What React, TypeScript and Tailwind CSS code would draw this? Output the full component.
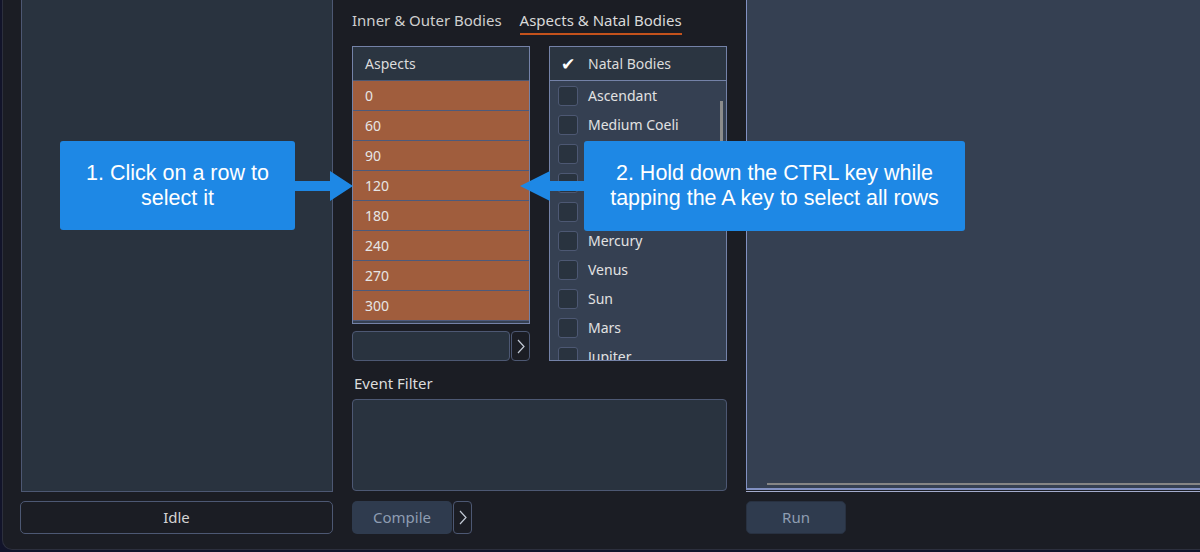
import React from "react";

const aspects = ["0", "60", "90", "120", "180", "240", "270", "300"];
const bodies = ["Ascendant", "Medium Coeli", "Vertex", "True Node", "Moon", "Mercury", "Venus", "Sun", "Mars", "Jupiter", "Saturn"];

function Chevron() {
  return (
    <svg width="8" height="15" viewBox="0 0 8 15" fill="none">
      <polyline points="1,1 7,7.5 1,14" stroke="#c3cad6" strokeWidth="1.2" />
    </svg>
  );
}

export default function App() {
  return (
    <div className="relative w-[1200px] h-[552px] overflow-hidden bg-[#12142a] font-['Noto_Sans',sans-serif] text-[14px]">
      <div className="ml-[2px] h-[550px] bg-[#1b1d24] border-l border-b border-[#2c2f3d] rounded-bl-[10px] flex gap-[19px] pl-[17px]">
        {/* Left column */}
        <div className="w-[313px] flex flex-col">
          <div className="ml-px h-[492px] bg-[#29333f] border-x border-b border-[#4d5873]" />
          <div className="mt-[9px] h-[33px] rounded-[5px] border border-[#4d5873] flex items-center justify-center text-[#d4d4d4] text-[15px]">
            Idle
          </div>
        </div>

        {/* Middle column */}
        <div className="w-[375px] flex flex-col">
          <div className="h-[46px] flex items-start pt-[10px] text-[15px] leading-[20px]">
            <div className="text-[#cfcfcf] pb-[3px] border-b-2 border-transparent">Inner &amp; Outer Bodies</div>
            <div className="ml-[18px] text-[#d9d9d9] pb-[3px] border-b-2 border-[#c4521c]">Aspects &amp; Natal Bodies</div>
          </div>
          <div className="flex gap-[19px]">
            <div className="w-[178px] flex flex-col">
              <div className="h-[278px] border border-[#7482a8] bg-[#354052] flex flex-col overflow-hidden">
                <div className="h-[34px] shrink-0 bg-[#2b3541] border-b border-[#4d5873] flex items-center pl-[12px] text-[#dcdcdc]">
                  Aspects
                </div>
                {aspects.map((a) => (
                  <div key={a} className="h-[30px] shrink-0 bg-[#a05d3d] border-b border-[#4d5a7c] flex items-center pl-[12px] text-[#e6e6e6]">
                    {a}
                  </div>
                ))}
              </div>
              <div className="mt-[7px] h-[30px] flex gap-px">
                <div className="w-[158px] rounded-[4px] border border-[#4d5873] bg-[#29333f]" />
                <div className="w-[19px] rounded-[4px] border border-[#4d5873] bg-[#1b1d24] flex items-center justify-center">
                  <Chevron />
                </div>
              </div>
            </div>
            <div className="relative w-[178px] h-[315px] border border-[#7482a8] bg-[#354052] overflow-hidden flex flex-col">
              <div className="h-[34px] shrink-0 bg-[#2b3541] border-b border-[#7482a8] flex items-center text-[#dcdcdc]">
                <span className="ml-[11px] w-[27px] text-[17px] leading-[20px] text-white font-['DejaVu_Sans',sans-serif]">✔</span>
                <span>Natal Bodies</span>
              </div>
              {bodies.map((b) => (
                <div key={b} className="h-[29px] shrink-0 flex items-center pl-[8px] text-[#e2e2e2]">
                  <div className="w-[20px] h-[20px] rounded-[3px] border border-[#4d5873] bg-[#29333f]" />
                  <span className="ml-[10px]">{b}</span>
                </div>
              ))}
              <div className="absolute right-[3px] top-[54px] w-[3px] h-[110px] bg-[#8c8c8c]" />
            </div>
          </div>
          <div className="mt-[12px] pl-[2px] leading-[20px] text-[15px] text-[#dcdcdc]">Event Filter</div>
          <div className="mt-[6px] h-[92px] rounded-[4px] border border-[#4d5873] bg-[#29333f]" />
          <div className="mt-[10px] h-[33px] flex gap-px">
            <div className="w-[100px] rounded-[5px] bg-[#2f3b4e] flex items-center justify-center text-[15px] text-[#8e9db2]">
              Compile
            </div>
            <div className="w-[19px] rounded-[4px] border border-[#4d5873] bg-[#1b1d24] flex items-center justify-center">
              <Chevron />
            </div>
          </div>
        </div>

        {/* Right column */}
        <div className="flex-1 flex flex-col">
          <div className="relative h-[490px] bg-[#354052] border-l border-b-2 border-[#8291c2]">
            <div className="absolute left-[20px] right-0 bottom-[3px] h-[2px] bg-[#858585]" />
          </div>
          <div className="mt-px h-px bg-[#a3abcb]" />
          <div className="mt-[9px] w-[100px] h-[33px] rounded-[5px] bg-[#2f3b4e] border border-[#283141] flex items-center justify-center text-[15px] text-[#8e9db2]">
            Run
          </div>
        </div>
      </div>

      {/* Callout 1 */}
      <div className="absolute left-[60px] top-[141px] w-[235px] h-[89px] rounded-[3px] bg-[#1e88e5] flex items-center justify-center text-center text-white text-[21.5px] leading-[25px] font-['Liberation_Sans',Arial,sans-serif]">
        <div>
          1. Click on a row to
          <br />
          select it
        </div>
      </div>
      <svg className="absolute left-[295px] top-[170px]" width="58" height="31" viewBox="0 0 58 31">
        <polygon points="0,11 35,11 35,1 58,16 35,31 35,21 0,21" fill="#1e88e5" />
      </svg>

      {/* Callout 2 */}
      <div className="absolute left-[584px] top-[141px] w-[381px] h-[90px] rounded-[3px] bg-[#1e88e5] flex items-center justify-center text-center text-white text-[21.5px] leading-[25px] font-['Liberation_Sans',Arial,sans-serif]">
        <div>
          2. Hold down the CTRL key while
          <br />
          tapping the A key to select all rows
        </div>
      </div>
      <svg className="absolute left-[520px] top-[170px]" width="64" height="31" viewBox="0 0 64 31">
        <polygon points="64,11 30,11 30,1 0,16 30,31 30,21 64,21" fill="#1e88e5" />
      </svg>
    </div>
  );
}
